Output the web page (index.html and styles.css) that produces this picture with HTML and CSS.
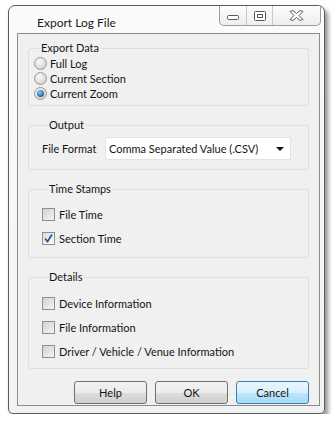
FILE: index.html
```html
<!DOCTYPE html>
<html lang="en">
<head>
  <meta charset="UTF-8">
  <title>Export Log File</title>
  <link rel="stylesheet" href="styles.css">
</head>
<body>

<div class="window">
  <div class="titlebar">
    <span class="title">Export Log File</span>
    <div class="controls">
      <div class="ctl ctl-min">
        <svg width="12" height="6" viewBox="0 0 12 6"><rect x="0.5" y="0.5" width="11" height="4" rx="1" fill="#fff" stroke="#5a5a5a"/></svg>
      </div>
      <div class="ctl ctl-max">
        <svg width="12" height="10" viewBox="0 0 12 10"><rect x="0.5" y="0.5" width="11" height="9" rx="1" fill="#fff" stroke="#5a5a5a"/><rect x="3.5" y="3.5" width="5" height="3" fill="#fff" stroke="#5a5a5a"/></svg>
      </div>
      <div class="ctl ctl-close">
        <svg width="15" height="11" viewBox="0 0 15 11"><path d="M1 1.5 L4 0.5 L7.5 3.5 L11 0.5 L14 1.5 L10 5.5 L14 9.5 L11 10.5 L7.5 7.5 L4 10.5 L1 9.5 L5 5.5 Z" fill="#fff" stroke="#5a5a5a" stroke-linejoin="round"/></svg>
      </div>
    </div>
  </div>

  <div class="client">
    <fieldset class="group group-export">
      <legend>Export Data</legend>
      <div class="row"><span class="radio"></span>Full Log</div>
      <div class="row"><span class="radio"></span>Current Section</div>
      <div class="row"><span class="radio checked"></span>Current Zoom</div>
    </fieldset>

    <fieldset class="group group-output">
      <legend>Output</legend>
      <div class="format-row">
        <span class="format-label">File Format</span>
        <div class="select">
          <span>Comma Separated Value (.CSV)</span>
          <span class="arrow"></span>
        </div>
      </div>
    </fieldset>

    <fieldset class="group group-time">
      <legend>Time Stamps</legend>
      <div class="row"><span class="check"></span>File Time</div>
      <div class="row"><span class="check checked">
        <svg width="9" height="9" viewBox="0 0 9 9"><path d="M1 4.5 L3.5 7.5 L8 0.5" fill="none" stroke="#2a5a9a" stroke-width="1.8"/></svg>
      </span>Section Time</div>
    </fieldset>

    <fieldset class="group group-details">
      <legend>Details</legend>
      <div class="row"><span class="check"></span>Device Information</div>
      <div class="row"><span class="check"></span>File Information</div>
      <div class="row"><span class="check"></span>Driver / Vehicle / Venue Information</div>
    </fieldset>

    <div class="buttons">
      <button class="btn">Help</button>
      <button class="btn">OK</button>
      <button class="btn btn-default">Cancel</button>
    </div>
  </div>
</div>

</body>
</html>
```

FILE: styles.css
```css
* {
  box-sizing: border-box;
}

body {
  margin: 0;
  background: #fff;
  font-family: Lato, sans-serif;
  font-size: 11px;
  line-height: 15px;
  color: #141414;
  white-space: nowrap;
}

.window {
  margin: 5px 0 0 8px;
  width: 317px;
  height: 409px;
  border: 1px solid #5c5c5c;
  border-radius: 7px 7px 5px 5px;
  background: linear-gradient(#fbfbfb, #f1f2f3);
  box-shadow: 3px 4px 5px rgba(0,0,0,0.45);
  display: flex;
  flex-direction: column;
  padding: 0 4px 7px 8px;
}

.titlebar {
  height: 27px;
  display: flex;
  align-items: flex-start;
}

.title {
  padding: 9px 0 0 20px;
  font-size: 12px;
  color: #1a1a1a;
}

.controls {
  margin-left: auto;
  margin-right: -1px;
  display: flex;
  height: 20px;
  border: 1px solid #9c9c9c;
  border-top: none;
  border-radius: 0 0 5px 5px;
  background: linear-gradient(#fdfdfd, #eceef0);
}

.ctl {
  display: flex;
  align-items: center;
  justify-content: center;
  height: 100%;
}

.ctl-min {
  width: 27px;
  border-right: 1px solid #c9c9c9;
  padding-top: 4px;
}

.ctl-max {
  width: 26px;
  border-right: 1px solid #c9c9c9;
}

.ctl-close {
  width: 47px;
}

.client {
  flex: 1;
  background: #f0f0f0;
  border: 1px solid #8c8c8c;
  padding: 6px 10px 0 10px;
  display: flex;
  flex-direction: column;
  gap: 11px;
}

.group {
  margin: 0;
  border: 1px solid #d9dfe3;
  border-radius: 3px;
  padding: 0 5px;
  display: flex;
  flex-direction: column;
}

.group legend {
  padding: 0 2px;
  margin-left: 5px;
  line-height: 16px;
}

.group-export {
  height: 66px;
}

.group-output {
  height: 53px;
  padding-left: 13px;
}

.group-time {
  height: 77px;
  padding: 9px 13px 0;
  gap: 8px;
}

.group-details {
  height: 100px;
  padding: 10px 13px 0;
  gap: 8px;
}

.row {
  display: flex;
  align-items: center;
  height: 15px;
  gap: 3px;
}

.group-time .row,
.group-details .row {
  height: 16px;
  gap: 4px;
}

.radio {
  flex: none;
  width: 13px;
  height: 13px;
  border-radius: 50%;
  border: 1px solid #9a9a9a;
  background: radial-gradient(circle at 40% 35%, #fafafa, #d6d6d6 70%);
  display: flex;
  align-items: center;
  justify-content: center;
}

.radio.checked::after {
  content: "";
  width: 7px;
  height: 7px;
  border-radius: 50%;
  background: radial-gradient(circle at 40% 35%, #8ad0f5, #1f5e98 70%);
}

.check {
  flex: none;
  width: 13px;
  height: 13px;
  border: 1px solid #8e8f8f;
  background: linear-gradient(135deg, #d2d2d2, #f4f4f4);
  display: flex;
  align-items: center;
  justify-content: center;
}

.check.checked {
  background: linear-gradient(135deg, #dcdcdc, #fafafa);
}

.format-row {
  display: flex;
  align-items: center;
  margin-top: 4px;
}

.format-label {
  width: 63px;
}

.select {
  width: 186px;
  height: 23px;
  background: #fff;
  border: 1px solid #e3e3e3;
  display: flex;
  align-items: center;
  padding: 0 0 0 3px;
}

.select .arrow {
  margin-left: auto;
  margin-right: 6px;
  width: 0;
  height: 0;
  border-left: 4px solid transparent;
  border-right: 4px solid transparent;
  border-top: 4px solid #111;
}

.buttons {
  display: flex;
  justify-content: flex-end;
  gap: 8px;
  margin-top: 1px;
}

.btn {
  width: 73px;
  height: 23px;
  font-family: Lato, sans-serif;
  font-size: 11px;
  color: #141414;
  border: 1px solid #707070;
  border-radius: 3px;
  background: linear-gradient(#f2f2f2 0%, #ebebeb 50%, #dddddd 51%, #cfcfcf 100%);
  padding: 0;
}

.btn-default {
  border-color: #3c7fb1;
  background: linear-gradient(#eaf6fd 0%, #d9f0fc 50%, #bee6fd 51%, #a7d9f5 100%);
}
```
